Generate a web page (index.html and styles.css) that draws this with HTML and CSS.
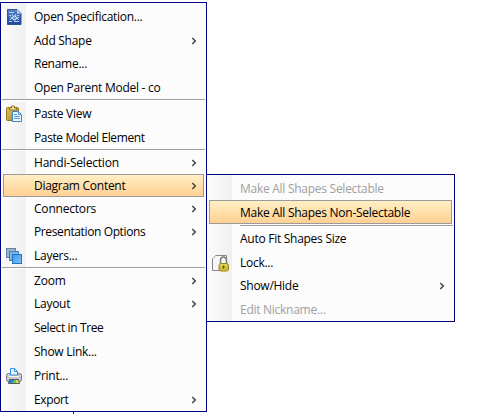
FILE: index.html
```html
<!DOCTYPE html>
<html lang="en">
<head>
<meta charset="utf-8">
<title>Diagram menu</title>
<link rel="stylesheet" href="styles.css">
</head>
<body>
<svg width="0" height="0" class="defs">
  <defs>
    <symbol id="chevron" viewBox="0 0 6 8"><path d="M1.300 1l3 3-3 3" fill="none" stroke="#444" stroke-width="1.5"/></symbol>
    <linearGradient id="blue" x2="0" y2="1"><stop stop-color="#5c86c8"/><stop offset="1" stop-color="#1d479c"/></linearGradient>
    <linearGradient id="gold" x2="1" y2="1"><stop stop-color="#e0c765"/><stop offset="1" stop-color="#a7831c"/></linearGradient>
    <linearGradient id="layer" x2="1" y2="1"><stop stop-color="#3f94e6"/><stop offset="1" stop-color="#7ec5ff"/></linearGradient>
  </defs>
</svg>
<div class="screen">
  <ul class="menu main">
    <li class="item tall"><span class="icon"><svg width="16" height="18" viewBox="0 0 16 18"><path d="M1.500 1.500h9.500l4 4v11H1.500z" fill="url(#blue)" stroke="#2d55a2"/><path d="M11 1.500v4h4z" fill="#b9d0f0"/><path d="M3 4.500h5M3 7.500h2m6 0h2M3 13.500h3m2 0h5M4 9l2 1-2 2m9-3-2 1 2 2M6 6l1 2m3-2-1 2" stroke="#b5cff5" fill="none"/><circle cx="8.500" cy="10" r="2" fill="#5e8cd2" stroke="#e5f2ff"/></svg></span><span class="label">Open Specification...</span></li>
    <li class="item"><span class="label">Add Shape</span><svg class="arrow"><use href="#chevron"/></svg></li>
    <li class="item tall"><span class="label">Rename...</span></li>
    <li class="item"><span class="label">Open Parent Model - co</span></li>
    <li class="rule first"></li>
    <li class="item tall"><span class="icon"><svg width="18" height="18" viewBox="0 0 18 18"><rect x="1.500" y="2.500" width="12" height="13" rx="1" fill="url(#gold)" stroke="#96751d"/><path d="M4.500 5V3h2V1h3v2h2v2z" fill="#f4e7a5" stroke="#927724"/><path d="M7.500 6.500h6l3 3v7h-9z" fill="#eef7ff" stroke="#3c83cd"/><path d="M13.500 6.500v3h3M9 9.500h3m-3 2h6m-6 2h6" fill="none" stroke="#529be1"/></svg></span><span class="label">Paste View</span></li>
    <li class="item"><span class="label tight">Paste Model Element</span></li>
    <li class="rule"></li>
    <li class="item"><span class="label loose">Handi-Selection</span><svg class="arrow"><use href="#chevron"/></svg></li>
    <li class="item selected"><span class="label">Diagram Content</span><svg class="arrow"><use href="#chevron"/></svg></li>
    <li class="item"><span class="label loose">Connectors</span><svg class="arrow"><use href="#chevron"/></svg></li>
    <li class="item tall up"><span class="label tight">Presentation Options</span><svg class="arrow"><use href="#chevron"/></svg></li>
    <li class="item"><span class="icon"><svg width="18" height="18" viewBox="0 0 18 18"><rect x="1.500" y="1.500" width="9" height="9" fill="#9ab5ce" stroke="#6382a0"/><rect x="4.500" y="4.500" width="9" height="9" fill="#80b3e2" stroke="#4482bb"/><rect x="7.500" y="7.500" width="9" height="9" fill="url(#layer)" stroke="#2277c5"/></svg></span><span class="label">Layers...</span></li>
    <li class="rule"></li>
    <li class="item"><span class="label loose">Zoom</span><svg class="arrow"><use href="#chevron"/></svg></li>
    <li class="item tall up"><span class="label">Layout</span><svg class="arrow"><use href="#chevron"/></svg></li>
    <li class="item tall"><span class="label tight">Select in Tree</span></li>
    <li class="item tall"><span class="label">Show Link...</span></li>
    <li class="item tall"><span class="icon"><svg width="18" height="18" viewBox="0 0 18 18"><rect x="1.500" y="6.500" width="15" height="8" rx="2" fill="#c9c9cd" stroke="#77777d"/><path d="M5.500 8V1.500h4l3 3V8z" fill="#e5f5ff" stroke="#338fdf"/><path d="M9.500 1.500v3h3" fill="none" stroke="#338fdf"/><path d="M4 9.500h10" stroke="#f7f7f7"/><path d="M4.500 12.500h9l1 4h-11z" fill="#245db8" stroke="#555c68"/><path d="M5 13h4l-2 3H4z" fill="#2379e8"/><path d="M9 13h3l-1 3H7z" fill="#5fcc32"/><path d="M11 13h2l1 3h-3z" fill="#d8d948"/></svg></span><span class="label">Print...</span></li>
    <li class="item"><span class="label tight">Export</span><svg class="arrow"><use href="#chevron"/></svg></li>
  </ul>
  <ul class="menu sub">
    <li class="item tall down disabled"><span class="label">Make All Shapes Selectable</span></li>
    <li class="item tall down selected"><span class="label">Make All Shapes Non-Selectable</span></li>
    <li class="rule inset"></li>
    <li class="item tall up"><span class="label">Auto Fit Shapes Size</span></li>
    <li class="item"><span class="icon"><svg width="18" height="18" viewBox="0 0 18 18"><path d="M4.500 1.500h11v15h-14v-12z" fill="#f7f7f7" stroke="#888"/><path d="M1.500 4.500h3v-3z" fill="#ddd"/><path d="M9.500 10V6.500a3 3.500 0 0 1 6 0V10" fill="none" stroke="#77776c" stroke-width="1.500"/><rect x="8" y="9.500" width="9.500" height="7.500" rx="2" fill="#d5bd35" stroke="#96852d"/><path d="M9 11h7" stroke="#f2e584"/><path d="M12.500 11.500v3" stroke="#53491a" stroke-width="1.500"/></svg></span><span class="label">Lock...</span></li>
    <li class="item tall up"><span class="label">Show/Hide</span><svg class="arrow"><use href="#chevron"/></svg></li>
    <li class="item disabled"><span class="label">Edit Nickname...</span></li>
  </ul>
  <i class="tick"></i>
</div>
</body>
</html>
```
FILE: styles.css
```css
* { box-sizing: border-box; }
body { margin: 0; background: #fff; }
.defs { position: absolute; }
.screen { position: relative; width: 491px; height: 414px; overflow: hidden; }
.menu {
  position: absolute;
  margin: 0;
  padding: 2px 2px 0;
  list-style: none;
  border: 1px solid #000080;
  background: linear-gradient(90deg, #fcfcfc, #f0f0f0) 0 0 / 25px 100% no-repeat, #fcfcfc;
  font: 12px/18px "Open Sans", "Noto Sans", sans-serif;
  letter-spacing: -0.27px;
  color: #000;
}
.main { left: 0; top: 2px; width: 207px; height: 410px; }
.sub { left: 206px; top: 174px; width: 249px; height: 148px; padding-top: 1px; }
.item {
  display: flex;
  align-items: center;
  height: 23px;
  padding: 0 6px 0 1px;
  border: 1px solid transparent;
}
.tall { height: 24px; }
.up { padding-bottom: 1px; }
.down { padding-top: 2px; }
.selected {
  border-color: #9b9b9b;
  background: linear-gradient(#ffefc5, #ffd193);
}
.disabled { color: #a0a0a0; }
.icon { display: flex; justify-content: center; width: 18px; margin-right: -18px; }
.label { margin-left: 29px; white-space: nowrap; }
.tight { letter-spacing: -0.38px; }
.loose { letter-spacing: -0.2px; }
.arrow { width: 6px; height: 8px; margin-left: auto; }
.rule {
  height: 2px;
  margin: 0 -1px;
  border-top: 1px solid #a0a0a0;
  background: #fcfcfc;
}
.first { height: 3px; }
.inset { margin: 1px -1px 0 31px; }
.tick { position: absolute; left: 73px; top: 412px; width: 1px; height: 2px; background: #222; }
```
